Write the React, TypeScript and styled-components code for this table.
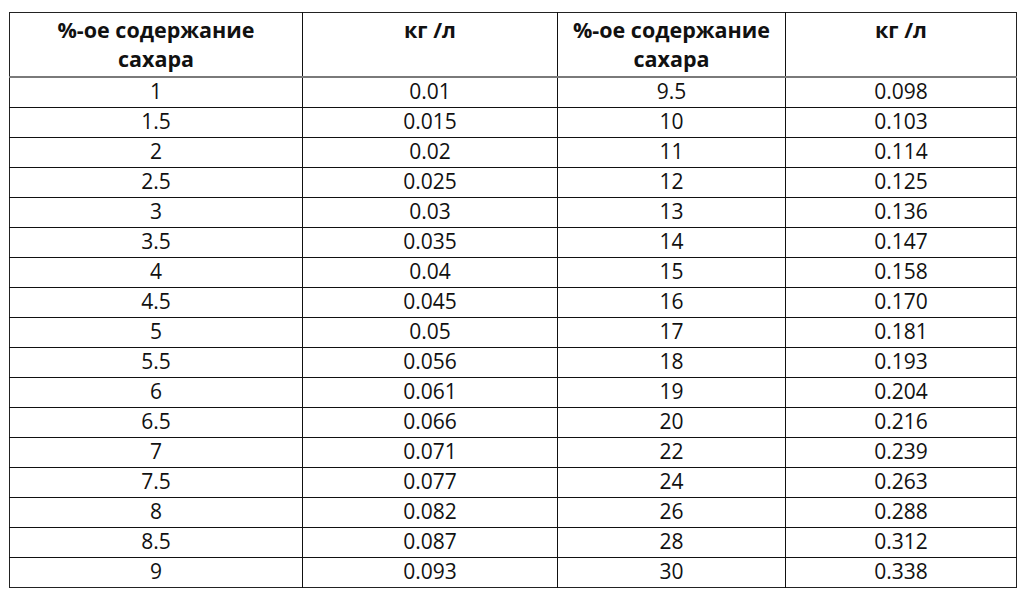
import styled, { createGlobalStyle } from "styled-components";

const GlobalStyle = createGlobalStyle`
  html, body {
    margin: 0;
    padding: 0;
    background: #ffffff;
  }
  body {
    font-family: "Open Sans", "Liberation Sans", sans-serif;
    color: #111;
  }
  *, *::before, *::after {
    box-sizing: border-box;
  }
`;

const Page = styled.div`
  padding: 12px 0 0 9px;
`;

const Table = styled.table`
  width: 1007px;
  border-collapse: collapse;
  table-layout: fixed;
  border: 1px solid #222;
`;

const Col = styled.col<{ $w: number }>`
  width: ${(p) => p.$w}px;
`;

const HeadCell = styled.th`
  height: 64px;
  padding: 2px 0 0;
  vertical-align: top;
  text-align: center;
  font-size: 21.5px;
  line-height: 29px;
  font-weight: 700;
  border-left: 1.5px solid #111;
  border-bottom: 2px solid #7a7a7a;
  &:first-child {
    border-left: none;
  }
`;

const Row = styled.tr`
  height: 30px;
`;

const Cell = styled.td`
  padding: 0 0 2px;
  text-align: center;
  vertical-align: middle;
  font-size: 21px;
  font-weight: 500;
  line-height: 27px;
  border-left: 1.5px solid #111;
  border-top: 1px solid #111;
  &:first-child {
    border-left: none;
  }
`;

const left: [string, string][] = [
  ["1", "0.01"],
  ["1.5", "0.015"],
  ["2", "0.02"],
  ["2.5", "0.025"],
  ["3", "0.03"],
  ["3.5", "0.035"],
  ["4", "0.04"],
  ["4.5", "0.045"],
  ["5", "0.05"],
  ["5.5", "0.056"],
  ["6", "0.061"],
  ["6.5", "0.066"],
  ["7", "0.071"],
  ["7.5", "0.077"],
  ["8", "0.082"],
  ["8.5", "0.087"],
  ["9", "0.093"],
];

const right: [string, string][] = [
  ["9.5", "0.098"],
  ["10", "0.103"],
  ["11", "0.114"],
  ["12", "0.125"],
  ["13", "0.136"],
  ["14", "0.147"],
  ["15", "0.158"],
  ["16", "0.170"],
  ["17", "0.181"],
  ["18", "0.193"],
  ["19", "0.204"],
  ["20", "0.216"],
  ["22", "0.239"],
  ["24", "0.263"],
  ["26", "0.288"],
  ["28", "0.312"],
  ["30", "0.338"],
];

const App = () => {
  return (
    <Page>
      <GlobalStyle />
      <Table>
        <colgroup>
          <Col $w={293} />
          <Col $w={255} />
          <Col $w={228} />
          <Col $w={231} />
        </colgroup>
        <thead>
          <tr>
            <HeadCell>%-ое содержание<br />сахара</HeadCell>
            <HeadCell>кг /л</HeadCell>
            <HeadCell>%-ое содержание<br />сахара</HeadCell>
            <HeadCell>кг /л</HeadCell>
          </tr>
        </thead>
        <tbody>
          {left.map((row, i) => (
            <Row key={row[0]}>
              <Cell>{row[0]}</Cell>
              <Cell>{row[1]}</Cell>
              <Cell>{right[i][0]}</Cell>
              <Cell>{right[i][1]}</Cell>
            </Row>
          ))}
        </tbody>
      </Table>
    </Page>
  );
};

export default App;
